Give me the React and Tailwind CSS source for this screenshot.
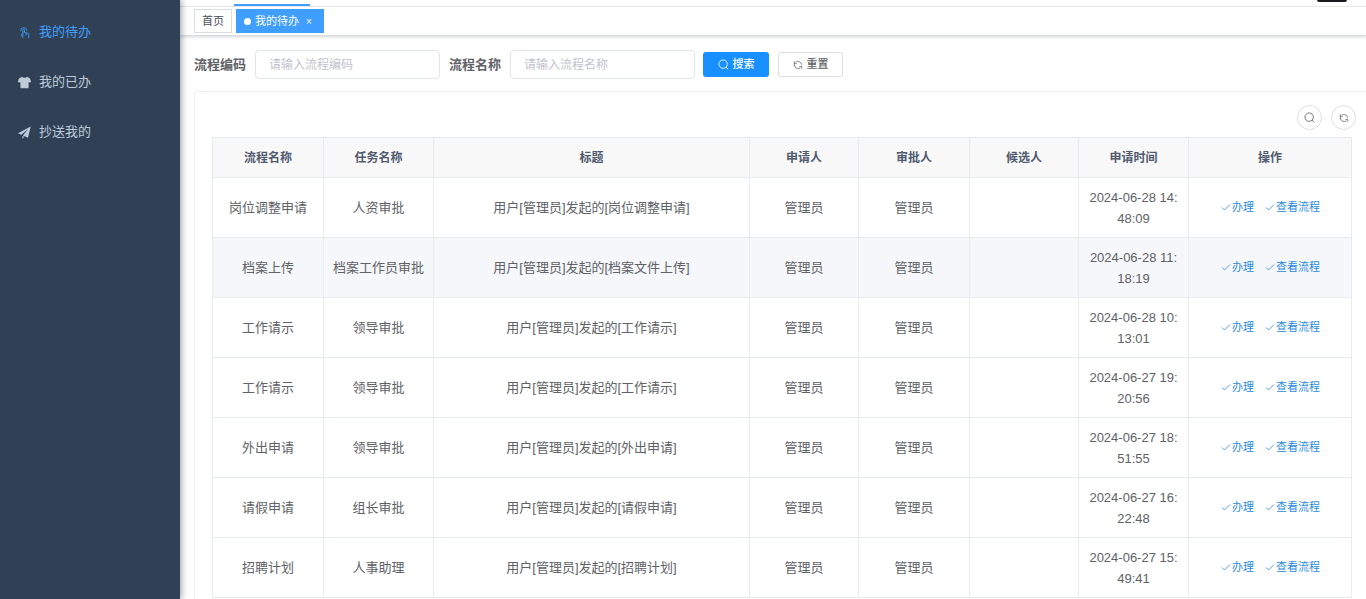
const menus = [
  { label: "我的待办", icon: TouchIcon, active: true },
  { label: "我的已办", icon: ShirtIcon },
  { label: "抄送我的", icon: PlaneIcon },
];

const columns = [
  { title: "流程名称", width: "w-[111px]" },
  { title: "任务名称", width: "w-[110px]" },
  { title: "标题", width: "" },
  { title: "申请人", width: "w-[109px]" },
  { title: "审批人", width: "w-[111px]" },
  { title: "候选人", width: "w-[109px]" },
  { title: "申请时间", width: "w-[110px]" },
  { title: "操作", width: "w-[163px]" },
];

const rows = [
  { name: "岗位调整申请", task: "人资审批", title: "用户[管理员]发起的[岗位调整申请]", time: "2024-06-28 14:48:09" },
  { name: "档案上传", task: "档案工作员审批", title: "用户[管理员]发起的[档案文件上传]", time: "2024-06-28 11:18:19", hover: true },
  { name: "工作请示", task: "领导审批", title: "用户[管理员]发起的[工作请示]", time: "2024-06-28 10:13:01" },
  { name: "工作请示", task: "领导审批", title: "用户[管理员]发起的[工作请示]", time: "2024-06-27 19:20:56" },
  { name: "外出申请", task: "领导审批", title: "用户[管理员]发起的[外出申请]", time: "2024-06-27 18:51:55" },
  { name: "请假申请", task: "组长审批", title: "用户[管理员]发起的[请假申请]", time: "2024-06-27 16:22:48" },
  { name: "招聘计划", task: "人事助理", title: "用户[管理员]发起的[招聘计划]", time: "2024-06-27 15:49:41" },
];

function TouchIcon({ className }) {
  return (
    <svg className={className} viewBox="0 0 24 24" fill="none" stroke="currentColor" strokeWidth="1.6" strokeLinecap="round" strokeLinejoin="round">
      <path d="M5 9a5.500 5.500 0 1 1 11-1" />
      <path d="M9 18V7.500a1.500 1.500 0 0 1 3 0V12l6 1.500c1.500.4 2 1.300 2 2.500l-.5 6" />
      <path d="M9 13l-3 3 3 5.500" />
      <path d="M15 13v4" />
    </svg>
  );
}

function ShirtIcon({ className }) {
  return (
    <svg className={className} viewBox="0 0 24 24" fill="currentColor">
      <path d="M7.500 1.500c1.500 2.300 7.500 2.300 9 0L20 3c1.300.6 2.500 2 3 3.500l1 4c.1.6-.2 1-.8 1.100l-3.700.6V21c0 1-.6 1.600-1.600 1.600H6.100c-1 0-1.600-.6-1.600-1.600v-8.800l-3.700-.6c-.6-.1-.9-.5-.8-1.100l1-4C1.500 5 2.700 3.600 4 3z" />
    </svg>
  );
}

function PlaneIcon({ className }) {
  return (
    <svg className={className} viewBox="0 0 24 24" fill="currentColor">
      <path d="M23.500 1 0 13.500l6 2.700L19 5.500 9 17.500l9.500 4.200z" />
      <path d="M8.200 18.500V24l3.300-4z" />
    </svg>
  );
}

function SearchIcon({ className }) {
  return (
    <svg className={className} viewBox="0 0 1024 1024" fill="none" stroke="currentColor" strokeWidth="80">
      <circle cx="480" cy="480" r="390" />
      <path d="M760 780l170 160" strokeLinecap="round" />
    </svg>
  );
}

function RefreshIcon({ className }) {
  return (
    <svg className={className} viewBox="0 0 1024 1024" fill="none" stroke="currentColor" strokeWidth="80" strokeLinecap="round" strokeLinejoin="round">
      <path d="M130 170v200h200" />
      <path d="M300 200A375 375 0 0 1 880 440" />
      <path d="M130 580A390 390 0 0 1 135 400" />
      <path d="M894 854V654H694" />
      <path d="M724 824A375 375 0 0 1 144 584" />
    </svg>
  );
}

function CheckIcon() {
  return (
    <svg className="size-3 shrink-0" viewBox="0 0 12 12" fill="none" stroke="currentColor" strokeWidth="0.8">
      <path d="M2 5.500l2.500 2.500L10 2.500" />
    </svg>
  );
}

function Sidebar() {
  return (
    <aside className="z-10 w-[180px] shrink-0 bg-[#304156] pt-[7px] shadow-[2px_0_6px_rgba(0,21,41,0.35)]">
      <nav>
        {menus.map(({ label, icon: Icon, active }) => (
          <a key={label} href="#" className={`flex h-[50px] items-center gap-2 pl-[18px] text-[13px] ${active ? "text-[#409eff]" : "text-[#bfcbd9]"}`}>
            <Icon className="size-[13px]" />
            {label}
          </a>
        ))}
      </nav>
    </aside>
  );
}

function TagsView() {
  return (
    <div className="flex h-[29px] items-center gap-1 border-b border-[#d8dce5] bg-white pl-3.5 text-[11px] shadow-[0_1px_3px_rgba(0,0,0,0.16)]">
      <a href="#" className="flex h-6 items-center border border-[#d8dce5] px-[7px] text-[#495060]">首页</a>
      <a href="#" className="flex h-6 items-center bg-[#409eff] pr-3 pl-2 text-white">
        <span className="mr-1 size-[7px] rounded-full bg-white" />
        我的待办
        <span className="ml-[7px] text-[10px]">×</span>
      </a>
    </div>
  );
}

function SearchForm() {
  return (
    <form className="flex h-[29px] items-center text-[13px]" onSubmit={(e) => e.preventDefault()}>
      <label htmlFor="code" className="w-[61px] font-bold text-[#606266]">流程编码</label>
      <input id="code" placeholder="请输入流程编码" className="mr-[9px] h-[29px] w-[185px] rounded border border-[#dfe4ed] px-[13px] text-xs outline-none placeholder:text-[#c0c4cc]" />
      <label htmlFor="name" className="w-[61px] font-bold text-[#606266]">流程名称</label>
      <input id="name" placeholder="请输入流程名称" className="mr-2 h-[29px] w-[185px] rounded border border-[#dfe4ed] px-[13px] text-xs outline-none placeholder:text-[#c0c4cc]" />
      <button type="submit" className="mr-[9px] flex h-[25px] w-[66px] items-center justify-center gap-1 rounded-[3px] bg-[#1890ff] text-[11px] font-medium text-white">
        <SearchIcon className="size-[11px]" />
        搜索
      </button>
      <button type="reset" className="flex h-[25px] w-[65px] items-center justify-center gap-1 rounded-[3px] border border-[#dcdfe6] bg-white text-[11px] font-medium text-[#606266]">
        <RefreshIcon className="size-[10px]" />
        重置
      </button>
    </form>
  );
}

function TaskTable() {
  return (
    <table className="w-full table-fixed border-collapse text-center text-[13px] leading-[21px] text-[#606266]">
      <thead>
        <tr className="h-10 bg-[#f8f8f9] text-xs text-[#515a6e]">
          {columns.map((col) => (
            <th key={col.title} className={`border border-[#e6ebf0] font-bold ${col.width}`}>{col.title}</th>
          ))}
        </tr>
      </thead>
      <tbody>
        {rows.map((row) => (
          <tr key={row.time} className={`h-[60px] ${row.hover ? "bg-[#f5f7fa]" : ""}`}>
            <td className="border border-[#e6ebf0]">{row.name}</td>
            <td className="border border-[#e6ebf0]">{row.task}</td>
            <td className="border border-[#e6ebf0]">{row.title}</td>
            <td className="border border-[#e6ebf0]">管理员</td>
            <td className="border border-[#e6ebf0]">管理员</td>
            <td className="border border-[#e6ebf0]" />
            <td className="border border-[#e6ebf0] px-2 break-all">{row.time}</td>
            <td className="border border-[#e6ebf0]">
              <div className="flex items-center justify-center gap-2.5 text-[11px] text-[#2a8bdc]">
                <button type="button" className="flex items-center"><CheckIcon />办理</button>
                <button type="button" className="flex items-center"><CheckIcon />查看流程</button>
              </div>
            </td>
          </tr>
        ))}
      </tbody>
    </table>
  );
}

export default function App() {
  return (
    <div className="flex h-screen overflow-hidden bg-white font-['Liberation_Sans','Noto_Sans_CJK_SC',sans-serif]">
      <Sidebar />
      <main className="min-w-0 flex-1">
        <header className="flex h-[7px] items-end justify-between border-b border-[#eeeeee] pr-[19px] pl-[54px]">
          <div className="h-0.5 w-[76px] bg-[#409eff]" />
          <div className="h-0.5 w-[30px] self-start rounded-b-full bg-[#1c1a20]" />
        </header>
        <TagsView />
        <div className="pt-3.5 pl-3.5">
          <SearchForm />
          <section className="mt-3 rounded-tl border-t border-l border-[#ebeef5] pt-[13px] pr-3.5 pb-5 pl-[17px]">
            <div className="-mr-1 mb-[7px] flex justify-end gap-[9px]">
              <button type="button" aria-label="搜索" className="flex size-[25px] items-center justify-center rounded-full border border-[#dcdfe6] text-[#606266]">
                <SearchIcon className="size-[11px]" />
              </button>
              <button type="button" aria-label="刷新" className="flex size-[25px] items-center justify-center rounded-full border border-[#dcdfe6] text-[#606266]">
                <RefreshIcon className="size-[10px]" />
              </button>
            </div>
            <TaskTable />
          </section>
        </div>
      </main>
    </div>
  );
}
